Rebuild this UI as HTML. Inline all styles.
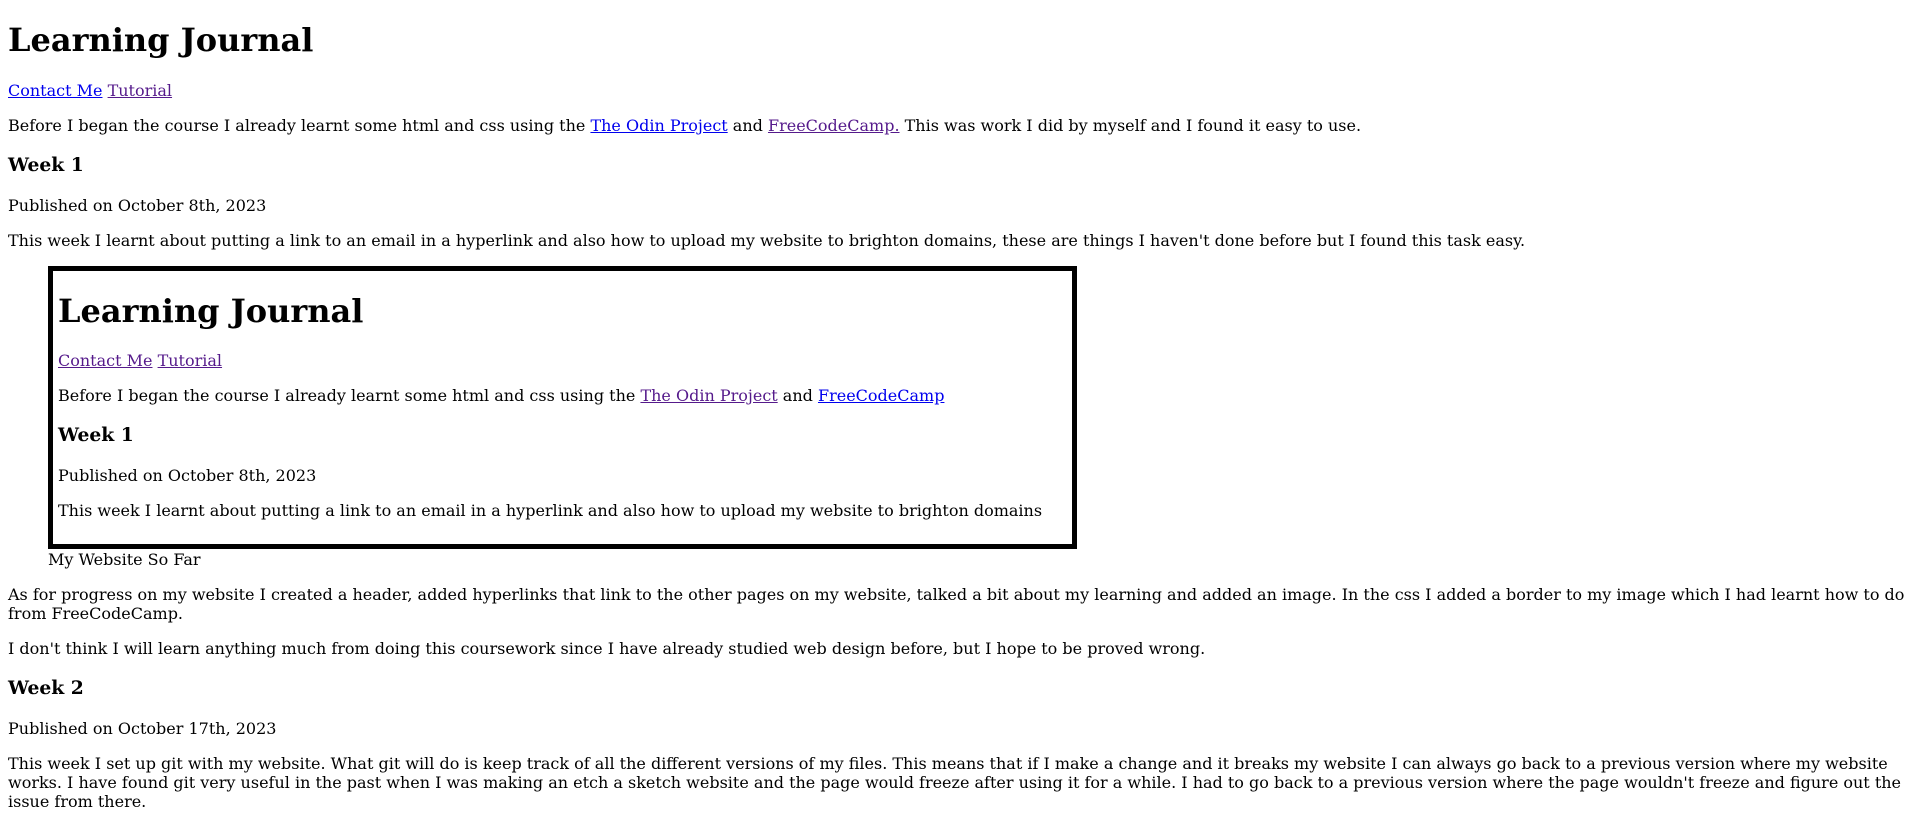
<!DOCTYPE html>
<html>
<head>
<meta charset="utf-8">
<style>
  html, body { background:#fff; }
  body { margin:8px; font-family:"DejaVu Serif", serif; font-size:16px; line-height:1.2; color:#000; }
  a { text-decoration:underline; }
  .b { color:#0000EE; }
  .v { color:#551A8B; }
  figure { margin:16px 40px; }
  .shot { width:1014px; height:273px; border:5px solid #000; padding:0 0 0 5px; box-sizing:content-box; overflow:hidden; margin-left:0; margin-bottom:1px; }
  .shot h1 { margin:21px 0; }
</style>
</head>
<body>
<h1>Learning Journal</h1>
<p><a href="#" class="b">Contact Me</a> <a href="#" class="v">Tutorial</a></p>
<p>Before I began the course I already learnt some html and css using the <a href="#" class="b">The Odin Project</a> and <a href="#" class="v">FreeCodeCamp.</a> This was work I did by myself and I found it easy to use.</p>
<h3>Week 1</h3>
<p>Published on October 8th, 2023</p>
<p>This week I learnt about putting a link to an email in a hyperlink and also how to upload my website to brighton domains, these are things I haven't done before but I found this task easy.</p>
<figure>
  <div class="shot">
    <h1>Learning Journal</h1>
    <p><a href="#" class="v">Contact Me</a> <a href="#" class="v">Tutorial</a></p>
    <p>Before I began the course I already learnt some html and css using the <a href="#" class="v">The Odin Project</a> and <a href="#" class="b">FreeCodeCamp</a></p>
    <h3>Week 1</h3>
    <p>Published on October 8th, 2023</p>
    <p>This week I learnt about putting a link to an email in a hyperlink and also how to upload my website to brighton domains</p>
  </div>
  <figcaption>My Website So Far</figcaption>
</figure>
<p>As for progress on my website I created a header, added hyperlinks that link to the other pages on my website, talked a bit about my learning and added an image. In the css I added a border to my image which I had learnt how to do from FreeCodeCamp.</p>
<p>I don't think I will learn anything much from doing this coursework since I have already studied web design before, but I hope to be proved wrong.</p>
<h3>Week 2</h3>
<p>Published on October 17th, 2023</p>
<p>This week I set up git with my website. What git will do is keep track of all the different versions of my files. This means that if I make a change and it breaks my website I can always go back to a previous version where my website works. I have found git very useful in the past when I was making an etch a sketch website and the page would freeze after using it for a while. I had to go back to a previous version where the page wouldn't freeze and figure out the issue from there.</p>
</body>
</html>
